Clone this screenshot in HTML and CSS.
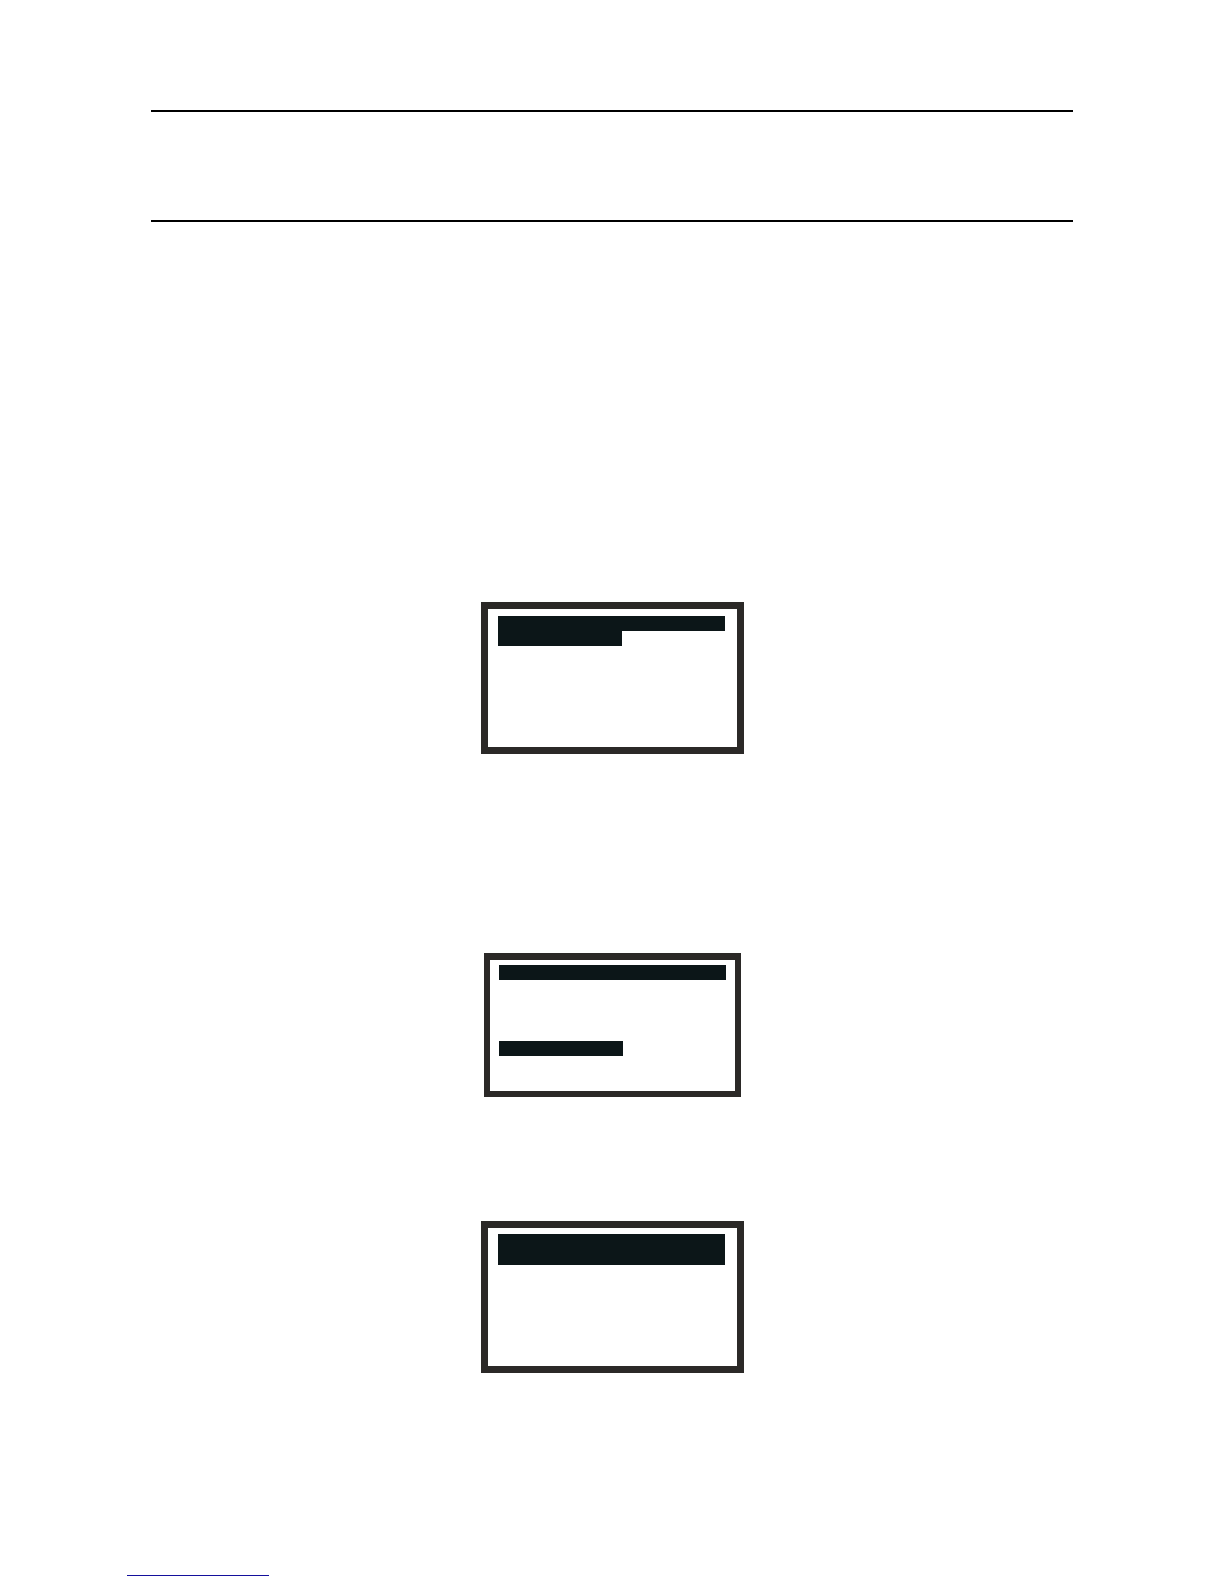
FILE: index.html
```html
<!DOCTYPE html>
<html lang="en">
<head>
  <meta charset="utf-8">
  <meta name="viewport" content="width=device-width, initial-scale=1">
  <title>Display screens</title>
  <link rel="stylesheet" href="styles.css">
</head>
<body>
  <header class="heading"></header>
  <main class="content">
    <div class="screen">
      <div class="bar"></div>
      <div class="bar bar-short"></div>
    </div>
    <div class="screen screen-compact">
      <div class="bar"></div>
      <div class="bar bar-short"></div>
    </div>
    <div class="screen screen-title">
      <div class="bar bar-tall"></div>
    </div>
  </main>
  <footer class="footer">
    <hr class="footer-rule">
  </footer>
</body>
</html>
```
FILE: styles.css
```css
* {
  box-sizing: border-box;
}

body {
  display: flex;
  flex-direction: column;
  min-height: 100vh;
  margin: 0;
  padding: 110px 151px 8px;
  background: #fff;
  font-family: "Liberation Sans", sans-serif;
}

.heading {
  min-height: 112px;
  border-top: 2px solid #000;
  border-bottom: 2px solid #000;
}

.content {
  display: flex;
  flex-direction: column;
  align-items: center;
  padding-top: 380px;
}

.screen {
  width: 263px;
  max-width: 100%;
  min-height: 152px;
  padding: 7px 12px 7px 10px;
  border: 7px solid #2b2927;
}

.screen-compact {
  display: flex;
  flex-direction: column;
  gap: 61px;
  width: 257px;
  min-height: 144px;
  margin-top: 199px;
  padding: 5px 9px;
  border-width: 7px 6px 6px;
}

.screen-title {
  margin-top: 124px;
  padding-top: 6px;
}

.bar {
  height: 15px;
  background: #0c1618;
}

.bar-short {
  width: 124px;
}

.bar-tall {
  height: 31px;
}

.footer {
  margin-top: auto;
  margin-left: -24px;
}

.footer-rule {
  width: 142px;
  height: 1px;
  margin: 0;
  border: 0;
  background: #14109c;
}
```
